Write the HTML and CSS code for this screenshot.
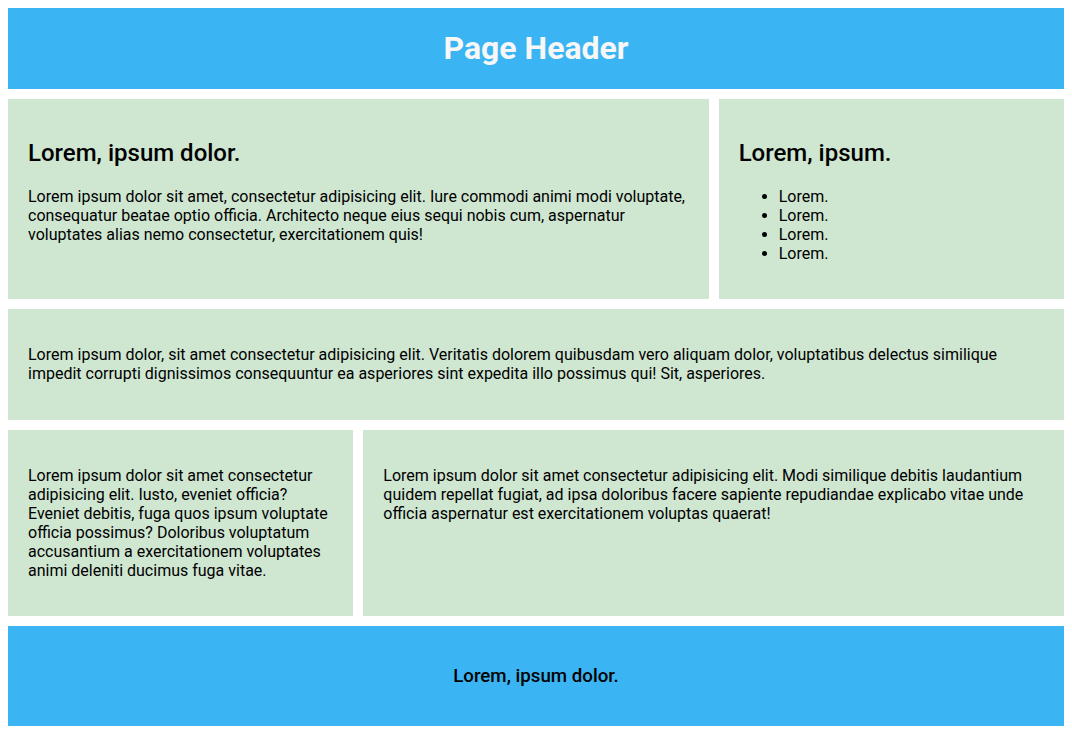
FILE: index.html
```html
<!DOCTYPE html>
<html lang="en">
<head>
<meta charset="utf-8">
<title>Grid Layout</title>
<link rel="stylesheet" href="styles.css">
</head>
<body>
<div class="container">
  <header class="header">
    <h1>Page Header</h1>
  </header>
  <section class="box main">
    <h2>Lorem, ipsum dolor.</h2>
    <p>Lorem ipsum dolor sit amet, consectetur adipisicing elit. Iure commodi animi modi voluptate, consequatur beatae optio officia. Architecto neque eius sequi nobis cum, aspernatur voluptates alias nemo consectetur, exercitationem quis!</p>
  </section>
  <aside class="box side">
    <h2>Lorem, ipsum.</h2>
    <ul>
      <li>Lorem.</li>
      <li>Lorem.</li>
      <li>Lorem.</li>
      <li>Lorem.</li>
    </ul>
  </aside>
  <section class="box wide">
    <p>Lorem ipsum dolor, sit amet consectetur adipisicing elit. Veritatis dolorem quibusdam vero aliquam dolor, voluptatibus delectus similique impedit corrupti dignissimos consequuntur ea asperiores sint expedita illo possimus qui! Sit, asperiores.</p>
  </section>
  <section class="box small">
    <p>Lorem ipsum dolor sit amet consectetur adipisicing elit. Iusto, eveniet officia? Eveniet debitis, fuga quos ipsum voluptate officia possimus? Doloribus voluptatum accusantium a exercitationem voluptates animi deleniti ducimus fuga vitae.</p>
  </section>
  <section class="box large">
    <p>Lorem ipsum dolor sit amet consectetur adipisicing elit. Modi similique debitis laudantium quidem repellat fugiat, ad ipsa doloribus facere sapiente repudiandae explicabo vitae unde officia aspernatur est exercitationem voluptas quaerat!</p>
  </section>
  <footer class="footer">
    <h3>Lorem, ipsum dolor.</h3>
  </footer>
</div>
</body>
</html>
```

FILE: styles.css
```css
html, body {
  font-family: Roboto, "Liberation Sans", Arial, sans-serif;
  color: #000;
}

body {
  margin: 8px;
  background: #fff;
}

.container {
  display: grid;
  grid-template-columns: 1fr 1fr 1fr;
  gap: 10px;
  min-height: calc(100vh - 16px);
}

.header {
  grid-column: 1 / 4;
  background: #3bb4f3;
  text-align: center;
}

.header h1 {
  color: #f7f7f7;
  font-weight: 700;
}

.box {
  background: #cfe6d1;
  padding: 20px;
}

.box h2 {
  font-weight: 500;
}

.main {
  grid-column: 1 / 3;
}

.side {
  grid-column: 3 / 4;
}

.wide {
  grid-column: 1 / 4;
}

.small {
  grid-column: 1 / 2;
}

.large {
  grid-column: 2 / 4;
}

.footer {
  grid-column: 1 / 4;
  background: #3bb4f3;
  text-align: center;
  padding: 20px;
}

.footer h3 {
  font-weight: 500;
}
```
